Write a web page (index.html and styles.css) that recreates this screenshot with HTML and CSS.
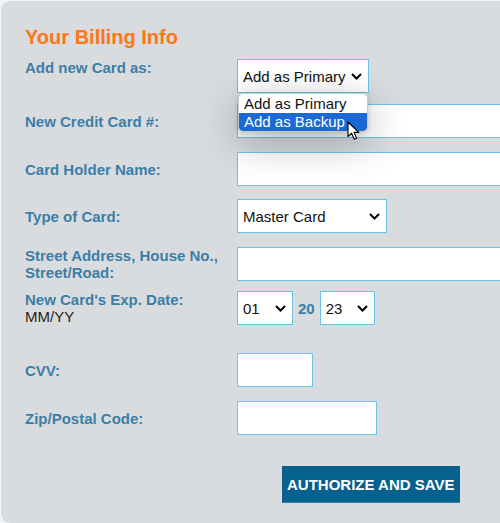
FILE: index.html
```html
<!DOCTYPE html>
<html lang="en">
<head>
    <meta charset="UTF-8">
    <meta name="viewport" content="width=device-width, initial-scale=1.0">
    <title>Billing Info</title>
    <link rel="stylesheet" href="styles.css">
</head>
<body>

    <div class="panel">
        <h2 class="title">Your Billing Info</h2>

        <form class="billing-form">
            <div class="form-row top">
                <label for="cardAs">Add new Card as:</label>
                <div class="select-wrap">
                    <select id="cardAs" class="select select-as">
                        <option>Add as Primary</option>
                        <option>Add as Backup</option>
                    </select>
                    <!-- open dropdown list, as shown in the screenshot -->
                    <ul class="dropdown">
                        <li>Add as Primary</li>
                        <li class="active">Add as Backup</li>
                    </ul>
                    <svg class="cursor" width="14" height="20" viewBox="0 0 14 20">
                        <path d="M1 1 L1 15.5 L4.6 12.2 L7.2 18.3 L9.6 17.3 L7 11.4 L11.8 11.4 Z" fill="#fff" stroke="#000" stroke-width="1.1" stroke-linejoin="round"/>
                    </svg>
                </div>
            </div>

            <div class="form-row tight">
                <label for="cardNo">New Credit Card #:</label>
                <input type="text" id="cardNo" class="input wide">
            </div>

            <div class="form-row">
                <label for="holder">Card Holder Name:</label>
                <input type="text" id="holder" class="input wide">
            </div>

            <div class="form-row snug">
                <label for="cardType">Type of Card:</label>
                <select id="cardType" class="select select-type">
                    <option>Master Card</option>
                    <option>Visa</option>
                </select>
            </div>

            <div class="form-row">
                <label for="street">Street Address, House No., Street/Road:</label>
                <input type="text" id="street" class="input wide">
            </div>

            <div class="form-row top tighter">
                <label>New Card's Exp. Date:<br><span class="hint">MM/YY</span></label>
                <div class="exp">
                    <select class="select select-small">
                        <option>01</option>
                    </select>
                    <span class="century">20</span>
                    <select class="select select-small">
                        <option>23</option>
                    </select>
                </div>
            </div>

            <div class="form-row spaced">
                <label for="cvv">CVV:</label>
                <input type="text" id="cvv" class="input cvv">
            </div>

            <div class="form-row">
                <label for="zip">Zip/Postal Code:</label>
                <input type="text" id="zip" class="input zip">
            </div>

            <div class="actions">
                <button type="submit" class="btn-save">Authorize and Save</button>
            </div>
        </form>
    </div>

</body>
</html>
```

FILE: styles.css
```css
html, body {
    margin: 0;
    padding: 0;
    background-color: #f3f4f5;
    overflow: hidden;
    height: 100%;
}
body {
    font-family: "Liberation Sans", Arial, sans-serif;
}
.panel {
    margin: 1px 0 0 1px;
    width: 499px;
    height: 522px;
    overflow: hidden;
    background-color: #d9dcdf; /* light gray panel */
    border-radius: 9px 0 0 9px;
    padding: 24px 0 0 24px;
    box-sizing: border-box;
}
.title {
    margin: 0 0 10px;
    font-size: 20px;
    line-height: 24px;
    color: #ff7614; /* orange heading */
}
.form-row {
    display: grid;
    grid-template-columns: 212px auto;
    align-items: center;
    margin-top: 14px;
}
.form-row.top {
    align-items: start;
}
.form-row.snug {
    margin-top: 13px;
}
.form-row.tight {
    margin-top: 11px;
}
.form-row.tighter {
    margin-top: 10px;
}
.form-row.spaced {
    margin-top: 28px;
}
.form-row:first-child {
    margin-top: 0;
}
.form-row label {
    font-size: 15px;
    line-height: 17px;
    font-weight: bold;
    color: #3b7ea8; /* steel blue labels */
}
.hint {
    font-weight: normal;
    color: #2a1a14;
}
.input, .select {
    height: 34px;
    box-sizing: border-box;
    border: 1px solid #6cc2e8;
    background-color: #fff;
    font-family: "Liberation Sans", Arial, sans-serif;
    font-size: 15px;
    color: #111;
    border-radius: 0;
    outline: none;
}
.input {
    padding: 0 6px;
}
.wide {
    width: 300px;
}
.cvv {
    width: 76px;
}
.zip {
    width: 140px;
}
.select {
    appearance: none;
    -webkit-appearance: none;
    padding: 0 20px 0 5px;
    background-image: url("data:image/svg+xml;utf8,<svg xmlns='http://www.w3.org/2000/svg' width='11' height='7' viewBox='0 0 11 7'><path d='M1 1 L5.5 5.5 L10 1' fill='none' stroke='black' stroke-width='2'/></svg>");
    background-repeat: no-repeat;
    background-position: right 6px center;
}
.select-as {
    width: 132px;
}
.select-type {
    width: 150px;
}
.select-small {
    width: 56px;
}
.select-wrap {
    position: relative;
    width: 132px;
}
.dropdown {
    position: absolute;
    top: 34px;
    left: 1px;
    width: 130px;
    margin: 0;
    padding: 1px 0 0;
    list-style-type: none;
    background-color: #fff;
    border: 1px solid #c8c8c8;
    border-radius: 5px;
    box-sizing: border-box;
    box-shadow: 0 10px 40px rgba(0, 0, 0, 0.3), 0 1px 4px rgba(0, 0, 0, 0.15);
    font-size: 15px;
    color: #111;
    overflow: hidden;
    z-index: 2;
}
.dropdown li {
    line-height: 18px;
    padding: 0 5px;
}
.dropdown li.active {
    background-color: #1a69d4; /* highlighted option */
    color: #fff;
    border-radius: 0 0 4px 4px;
}
.cursor {
    position: absolute;
    left: 110px;
    top: 62px;
    z-index: 3;
}
.exp {
    display: flex;
    align-items: center;
}
.century {
    font-size: 15px;
    font-weight: bold;
    color: #3b7ea8;
    margin: 0 5px 0 5px;
}
.exp .select-small:last-child {
    width: 55px;
}
.actions {
    margin-top: 31px;
    padding-left: 257px;
}
.btn-save {
    height: 37px;
    padding: 0 5px;
    background-color: #06618f; /* dark teal blue */
    border: none;
    border-bottom: 1px solid #3d7fa3;
    color: #fff;
    font-family: "Liberation Sans", Arial, sans-serif;
    font-size: 15px;
    font-weight: bold;
    text-transform: uppercase;
    cursor: pointer;
}
.btn-save:hover {
    background-color: #05547c;
}
```
